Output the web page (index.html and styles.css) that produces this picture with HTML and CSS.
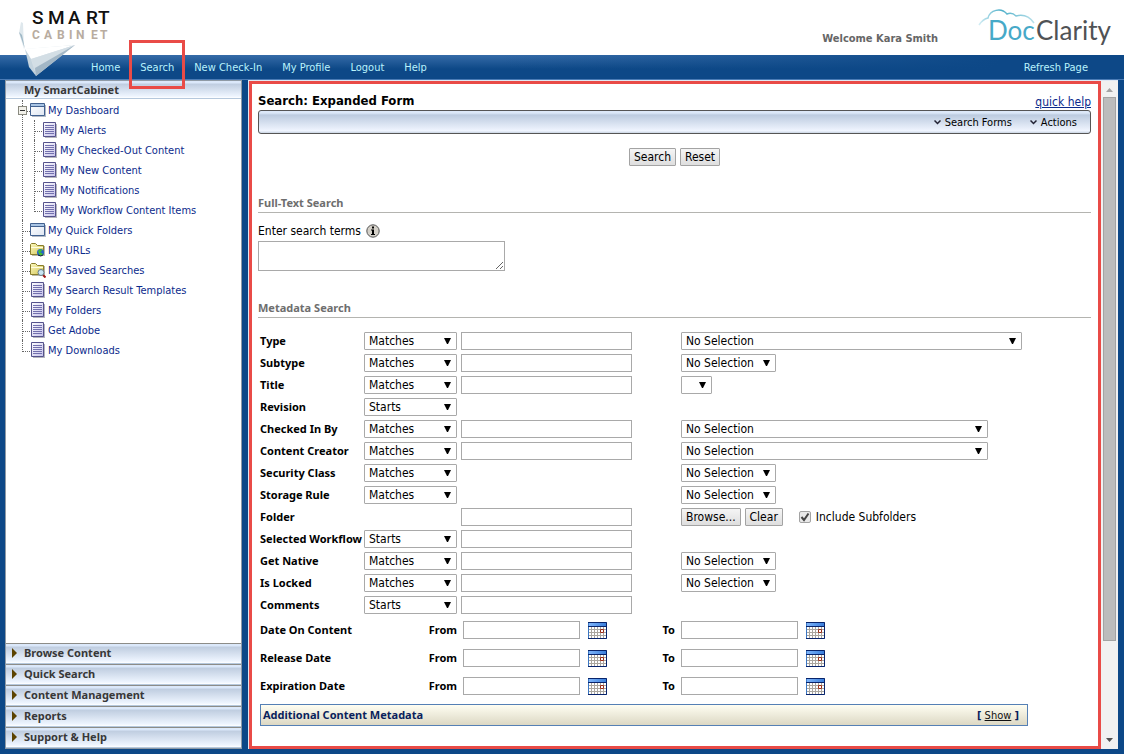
FILE: index.html
```html
<!DOCTYPE html>
<html lang="en">
<head>
<meta charset="UTF-8" />
<meta name="viewport" content="width=device-width, initial-scale=1" />
<title>SmartCabinet - Search</title>
<link rel="stylesheet" href="styles.css">
</head>
<body>

<!-- shared icons -->
<svg width="0" height="0" class="defs" aria-hidden="true">
  <defs>
    <linearGradient id="pageFill" x1="0" y1="0" x2="1" y2="1"><stop offset="0" stop-color="#fff"/><stop offset="1" stop-color="#c4c0ea"/></linearGradient>
    <linearGradient id="winFill" x1="0" y1="0" x2="1" y2="1"><stop offset="0" stop-color="#fff"/><stop offset="1" stop-color="#dfe6f2"/></linearGradient>
    <linearGradient id="folderFill" x1="0" y1="0" x2="1" y2="1"><stop offset="0" stop-color="#fbf7bb"/><stop offset="1" stop-color="#d3c75a"/></linearGradient>
    <linearGradient id="calFill" x1="0" y1="0" x2="1" y2="0"><stop offset="0" stop-color="#7db4fa"/><stop offset="1" stop-color="#3b7fdc"/></linearGradient>
    <linearGradient id="planeA" x1="0" y1="0" x2="1" y2="1"><stop offset="0" stop-color="#f4f8fa"/><stop offset="1" stop-color="#a9bccb"/></linearGradient>
    <linearGradient id="cloudLine" x1="0" y1="0" x2="1" y2="0"><stop offset="0" stop-color="#d3edf4"/><stop offset=".4" stop-color="#4fb0ca"/><stop offset="1" stop-color="#b9e0ea"/></linearGradient>
    <symbol id="page" viewBox="0 0 16 16">
      <path d="M3 2h12v14H3z" fill="#b5b5bd"/>
      <path d="M1.500.5h12v14h-12z" fill="url(#pageFill)" stroke="#55528c"/>
      <path d="M3 3.500h9M3 5.500h9M3 7.500h9M3 9.500h9M3 11.500h9" stroke="#7370ae"/>
    </symbol>
    <symbol id="window" viewBox="0 0 16 16">
      <path d="M2 3h14v12H2z" fill="#b3bac6"/>
      <path d="M.5 1.500h14v12H.5z" fill="url(#winFill)" stroke="#42618f"/>
      <path d="M1 2h13v2H1z" fill="#a8c4e4"/><path d="M0 4.500h15" stroke="#42618f"/>
    </symbol>
    <symbol id="folder" viewBox="0 0 16 16">
      <path d="M2 4h13v10H2z" fill="#b8b8a8"/>
      <path d="M.5 12.500v-10l1-1h4l2 2h6v9z" fill="url(#folderFill)" stroke="#8a7e2c"/>
      <path d="M1 5.500h12" stroke="#fffde0"/>
    </symbol>
    <symbol id="calendar" viewBox="0 0 19 17">
      <path d="M.5.5h18v16H.5z" fill="#fff" stroke="#3a76c4"/>
      <path d="M1 1h17v3H1z" fill="url(#calFill)"/>
      <path d="M3.500 5v11M6.500 5v11M9.500 5v11M12.500 5v11M15.500 5v11M1 7.500h17M1 10.500h17M1 13.500h17" stroke="#aaa69f"/>
      <path d="M0 .5h18.500v16H0M0 4.500h18" fill="none" stroke="#08246b"/>
      <path d="M12.500 7.500h3v3h-3z" fill="#fff" stroke="#9c2f18"/>
    </symbol>
  </defs>
</svg>

<header class="top">
  <svg class="smart-logo" width="112" height="78" viewBox="0 0 112 78" role="img" aria-label="Smart Cabinet">
    <path d="M21 22l2 1 1 26-5-16z" fill="#dfe8ed"/>
    <path d="M19 32l3 3 3 14z" fill="#9fb8c6"/>
    <path d="M25 49l50-4-39 31z" fill="url(#planeA)"/>
    <path d="M25 49l50-4-44 14z" fill="#fff"/>
    <path d="M31 59l44-14-40 23z" fill="#d3dee5"/>
    <path d="M35 68l40-23-39 31z" fill="#a3b7c6"/>
    <path d="M25 49l6 10 5 17-7-9z" fill="#c5d4de"/>
    <text class="smart-word" x="32 48 68 86 98" y="24">SMART</text>
    <text class="cabinet-word" x="32 44 57 69 76 91 100" y="39">CABINET</text>
  </svg>
  <span class="welcome">Welcome Kara Smith</span>
  <svg class="doc-logo" width="136" height="46" viewBox="0 0 136 46" role="img" aria-label="DocClarity">
    <path d="M3 25Q7 19 12 18C14 10 25 7 31 14Q36 12 40 16Q51 13 58 23" fill="none" stroke="url(#cloudLine)" stroke-width="1.500"/>
    <text class="doc-word" x="12" y="40">Doc<tspan class="clarity-word" x="60">Clarity</tspan></text>
  </svg>
</header>

<nav class="menu">
  <a href="#">Home</a>
  <a href="#" class="marked">Search</a>
  <a href="#">New Check-In</a>
  <a href="#">My Profile</a>
  <a href="#">Logout</a>
  <a href="#">Help</a>
  <a href="#" class="refresh">Refresh Page</a>
</nav>

<div class="workspace">
  <aside class="sidebar">
    <h2 class="side-title">My SmartCabinet</h2>
    <ul class="tree">
      <li>
        <a href="#"><svg class="icon"><use href="#window"/></svg>My Dashboard</a>
        <button class="toggle" aria-label="Collapse My Dashboard"></button>
        <ul class="subtree">
          <li><a href="#"><svg class="icon"><use href="#page"/></svg>My Alerts</a></li>
          <li><a href="#"><svg class="icon"><use href="#page"/></svg>My Checked-Out Content</a></li>
          <li><a href="#"><svg class="icon"><use href="#page"/></svg>My New Content</a></li>
          <li><a href="#"><svg class="icon"><use href="#page"/></svg>My Notifications</a></li>
          <li><a href="#"><svg class="icon"><use href="#page"/></svg>My Workflow Content Items</a></li>
        </ul>
      </li>
      <li><a href="#"><svg class="icon"><use href="#window"/></svg>My Quick Folders</a></li>
      <li><a href="#"><svg class="icon" viewBox="0 0 16 16"><use href="#folder"/><circle cx="10.500" cy="10.500" r="3.500" fill="#2464c8"/><path d="M8 9l3-2 1 2-2 1 3 2-2 2-2-2z" fill="#43bd32"/><path d="M8 13q3 2 5 0" stroke="#123" fill="none"/></svg>My URLs</a></li>
      <li><a href="#"><svg class="icon" viewBox="0 0 16 16"><use href="#folder"/><path d="M13 13l2.500 2.500" stroke="#a01818" stroke-width="2"/><circle cx="11" cy="10.500" r="3" fill="#c9e6f4" stroke="#66798a"/></svg>My Saved Searches</a></li>
      <li><a href="#"><svg class="icon"><use href="#page"/></svg>My Search Result Templates</a></li>
      <li><a href="#"><svg class="icon"><use href="#page"/></svg>My Folders</a></li>
      <li><a href="#"><svg class="icon"><use href="#page"/></svg>Get Adobe</a></li>
      <li><a href="#"><svg class="icon"><use href="#page"/></svg>My Downloads</a></li>
    </ul>
    <div class="accordion">
      <button>Browse Content</button>
      <button>Quick Search</button>
      <button>Content Management</button>
      <button>Reports</button>
      <button>Support &amp; Help</button>
    </div>
  </aside>

  <div class="content">
    <main class="page">
      <div class="page-head">
        <h1>Search: Expanded Form</h1>
        <a href="#">quick help</a>
      </div>
      <div class="toolbar">
        <button><svg width="7" height="5" viewBox="0 0 7 5"><path d="M.5.5l3 3 3-3" fill="none" stroke="#223" stroke-width="1.500"/></svg>Search Forms</button>
        <button><svg width="7" height="5" viewBox="0 0 7 5"><path d="M.5.5l3 3 3-3" fill="none" stroke="#223" stroke-width="1.500"/></svg>Actions</button>
      </div>

      <form>
        <div class="submit-row">
          <button type="button" class="btn">Search</button>
          <button type="button" class="btn">Reset</button>
        </div>

        <h3>Full-Text Search</h3>
        <div class="terms">
          <label for="terms">Enter search terms</label>
          <svg width="14" height="14" viewBox="0 0 14 14"><circle cx="7" cy="7" r="6.200" fill="#d4d0c8" stroke="#555"/><path d="M5 5.500h3V10h1v1H5v-1h1V6.500H5zM6 2.500h2v2H6z" fill="#000"/></svg>
        </div>
        <textarea id="terms"></textarea>

        <h3>Metadata Search</h3>
        <div class="fields">
          <div class="field">
            <label for="type">Type</label>
            <select class="op" aria-label="Type operator"><option>Matches</option></select>
            <input type="text" id="type">
            <div class="pick"><select class="widest" aria-label="Type value"><option>No Selection</option></select></div>
          </div>
          <div class="field">
            <label for="subtype">Subtype</label>
            <select class="op" aria-label="Subtype operator"><option>Matches</option></select>
            <input type="text" id="subtype">
            <div class="pick"><select class="short" aria-label="Subtype value"><option>No Selection</option></select></div>
          </div>
          <div class="field">
            <label for="title">Title</label>
            <select class="op" aria-label="Title operator"><option>Matches</option></select>
            <input type="text" id="title">
            <div class="pick"><select class="tiny" aria-label="Title value"><option></option></select></div>
          </div>
          <div class="field">
            <label for="revision">Revision</label>
            <select class="op" id="revision"><option>Starts</option></select>
          </div>
          <div class="field">
            <label for="checkedin">Checked In By</label>
            <select class="op" aria-label="Checked In By operator"><option>Matches</option></select>
            <input type="text" id="checkedin">
            <div class="pick"><select class="wide" aria-label="Checked In By value"><option>No Selection</option></select></div>
          </div>
          <div class="field">
            <label for="creator">Content Creator</label>
            <select class="op" aria-label="Content Creator operator"><option>Matches</option></select>
            <input type="text" id="creator">
            <div class="pick"><select class="wide" aria-label="Content Creator value"><option>No Selection</option></select></div>
          </div>
          <div class="field">
            <label for="security">Security Class</label>
            <select class="op" aria-label="Security Class operator"><option>Matches</option></select>
            <div class="pick"><select class="short" id="security"><option>No Selection</option></select></div>
          </div>
          <div class="field">
            <label for="storage">Storage Rule</label>
            <select class="op" aria-label="Storage Rule operator"><option>Matches</option></select>
            <div class="pick"><select class="short" id="storage"><option>No Selection</option></select></div>
          </div>
          <div class="field">
            <label for="folderPath">Folder</label>
            <input type="text" id="folderPath">
            <div class="pick">
              <button type="button" class="btn">Browse...</button>
              <button type="button" class="btn">Clear</button>
              <label class="check"><input type="checkbox" checked>Include Subfolders</label>
            </div>
          </div>
          <div class="field">
            <label for="workflow">Selected Workflow</label>
            <select class="op" aria-label="Selected Workflow operator"><option>Starts</option></select>
            <input type="text" id="workflow">
          </div>
          <div class="field">
            <label for="native">Get Native</label>
            <select class="op" aria-label="Get Native operator"><option>Matches</option></select>
            <input type="text" id="native">
            <div class="pick"><select class="short" aria-label="Get Native value"><option>No Selection</option></select></div>
          </div>
          <div class="field">
            <label for="locked">Is Locked</label>
            <select class="op" aria-label="Is Locked operator"><option>Matches</option></select>
            <input type="text" id="locked">
            <div class="pick"><select class="short" aria-label="Is Locked value"><option>No Selection</option></select></div>
          </div>
          <div class="field">
            <label for="comments">Comments</label>
            <select class="op" aria-label="Comments operator"><option>Starts</option></select>
            <input type="text" id="comments">
          </div>

          <div class="dates">
            <span>Date On Content</span>
            <label for="contentFrom">From</label>
            <div class="date"><input type="text" id="contentFrom"><button type="button" aria-label="Pick date"><svg><use href="#calendar"/></svg></button></div>
            <label for="contentTo">To</label>
            <div class="date"><input type="text" id="contentTo"><button type="button" aria-label="Pick date"><svg><use href="#calendar"/></svg></button></div>
          </div>
          <div class="dates">
            <span>Release Date</span>
            <label for="releaseFrom">From</label>
            <div class="date"><input type="text" id="releaseFrom"><button type="button" aria-label="Pick date"><svg><use href="#calendar"/></svg></button></div>
            <label for="releaseTo">To</label>
            <div class="date"><input type="text" id="releaseTo"><button type="button" aria-label="Pick date"><svg><use href="#calendar"/></svg></button></div>
          </div>
          <div class="dates">
            <span>Expiration Date</span>
            <label for="expireFrom">From</label>
            <div class="date"><input type="text" id="expireFrom"><button type="button" aria-label="Pick date"><svg><use href="#calendar"/></svg></button></div>
            <label for="expireTo">To</label>
            <div class="date"><input type="text" id="expireTo"><button type="button" aria-label="Pick date"><svg><use href="#calendar"/></svg></button></div>
          </div>

          <div class="extra">
            <strong>Additional Content Metadata</strong>
            <span><b>[</b> <a href="#">Show</a> <b>]</b></span>
          </div>
        </div>
      </form>
    </main>
    <div class="scroll" aria-hidden="true">
      <svg width="17" height="16" viewBox="0 0 17 16"><path d="M5 11h7L8.500 7z" fill="#a3a3a3"/></svg>
      <div class="thumb"></div>
      <div class="track"></div>
      <svg width="17" height="16" viewBox="0 0 17 16"><path d="M5 5h7l-3.500 4z" fill="#505050"/></svg>
    </div>
  </div>
</div>

</body>
</html>
```

FILE: styles.css
```css
* { box-sizing: border-box; }

body {
  margin: 0;
  min-height: 100vh;
  display: flex;
  flex-direction: column;
  background: #0d4887;
  font-family: "DejaVu Sans Condensed", "Noto Sans", sans-serif;
  font-size: 11px;
  color: #000;
}

button, input, select, textarea {
  font: inherit;
  color: inherit;
  margin: 0;
}
button { cursor: pointer; }
.defs { position: absolute; }

/* header */
.top {
  position: relative;
  z-index: 1;
  height: 55px;
  display: flex;
  justify-content: flex-end;
  align-items: flex-start;
  gap: 38px;
  padding-right: 12px;
  background: #fff;
}
.smart-logo {
  position: absolute;
  left: 0;
  top: 0;
}
.smart-word {
  font: 500 19px Roboto, sans-serif;
  fill: #111;
}
.cabinet-word {
  font: 700 12px Roboto, sans-serif;
  fill: #b8aca0;
}
.doc-word {
  font: 400 26px Lato, sans-serif;
  fill: #46a9c8;
}
.clarity-word { fill: #505255; }
.welcome {
  padding-top: 32px;
  font-weight: bold;
  line-height: 14px;
  color: #666;
}

/* menu */
.menu {
  height: 25px;
  display: flex;
  align-items: center;
  gap: 20px;
  padding: 0 36px 0 91px;
  border-bottom: 1px solid #4a7bb5;
  background: linear-gradient(to right, transparent 500px, #0d4887 1000px), linear-gradient(#366ba8, #0d4887 14px);
}
.menu a {
  position: relative;
  color: #b9f3fd;
  text-decoration: none;
}
.menu .refresh { margin-left: auto; }
.marked::after {
  content: "";
  position: absolute;
  z-index: 2;
  inset: -21px -11px -15px;
  border: 3px solid #e94b47;
}

.workspace {
  flex: 1;
  display: flex;
  gap: 6px;
  padding: 0 6px 5px 5px;
}

/* sidebar */
.sidebar {
  width: 237px;
  display: flex;
  flex-direction: column;
  background: #fff;
  border: 1px solid #8f9aa5;
}
.side-title, .accordion button {
  height: 18px;
  margin: 0;
  padding: 0 0 0 18px;
  font-family: "Noto Sans", sans-serif;
  font-size: 11px;
  font-weight: bold;
  line-height: 18px;
  text-align: left;
  color: #383838;
  background: linear-gradient(#dbe8fa 2px, #bfcde0 3px, #eef5ff 90%, #fff);
  border: 0;
  border-bottom: 1px solid #b5c8dd;
}
.tree, .subtree {
  list-style: none;
  margin: 0;
  padding: 0;
}
.tree {
  flex: 1;
  padding: 1px 0 0 16px;
}
.tree li {
  position: relative;
  border-left: 1px dotted #666;
}
.tree li:last-child { border-left-color: transparent; }
.tree li a {
  height: 20px;
  display: flex;
  align-items: center;
  color: #0b2a8c;
  text-decoration: none;
}
.tree li a::before {
  content: "";
  align-self: flex-start;
  width: 7px;
  height: 11px;
  margin-left: -1px;
  border-left: 1px dotted #666;
  border-bottom: 1px dotted #666;
}
.subtree { padding-left: 11px; }
.icon {
  width: 16px;
  height: 16px;
  margin-right: 2px;
}
.toggle {
  position: absolute;
  left: -5px;
  top: 6px;
  width: 9px;
  height: 9px;
  padding: 0;
  border: 1px solid #8a8a80;
  background: linear-gradient(#333, #333) center / 5px 1px no-repeat, #f2f1ea;
}

.accordion {
  display: flex;
  flex-direction: column;
}
.accordion button {
  display: flex;
  align-items: center;
  gap: 7px;
  height: 21px;
  padding: 0 0 1px 6px;
  border-top: 1px solid #8c8c88;
}
.accordion button::before {
  content: "";
  border: 5px solid transparent;
  border-left-color: #5c4300;
  border-right: 0;
}

/* content */
.content {
  flex: 1;
  display: flex;
  background: #fff;
  border: 1px solid #dfe8f4;
  border-width: 1px 0 0 1px;
}
.page {
  flex: 1;
  padding: 7px 7px 19px 6px;
  border: 3px solid #e94b47;
}
.page-head {
  display: flex;
  justify-content: space-between;
  height: 19px;
}
h1 {
  margin: 0;
  font-size: 13px;
  line-height: 19px;
}
.page-head a {
  padding-top: 2px;
  font-size: 12px;
  line-height: 18px;
  color: #0b2a8c;
}
.toolbar {
  height: 24px;
  display: flex;
  justify-content: flex-end;
  align-items: center;
  gap: 18px;
  padding-right: 13px;
  border: 1px solid #555;
  border-radius: 3px;
  background: linear-gradient(#dce8f8 2px, #bccbdf 4px, #f0f5ff 90%, #c9d4e2);
}
.toolbar button {
  display: flex;
  align-items: center;
  gap: 4px;
  padding: 0;
  border: 0;
  background: none;
}
.submit-row {
  display: flex;
  justify-content: center;
  gap: 4px;
  padding-top: 14px;
}
.btn {
  height: 18px;
  padding: 0 4px;
  font-size: 12px;
  line-height: 16px;
  border: 1px solid #a3a3a3;
  border-radius: 1px;
  background: linear-gradient(#f5f5f5, #dedede);
}
h3 {
  margin: 28px 0 0;
  padding-bottom: 1px;
  font-family: "Noto Sans", sans-serif;
  font-size: 11px;
  line-height: 17px;
  color: #6e6e6e;
  border-bottom: 1px solid #b4b4b0;
}
.terms {
  display: flex;
  align-items: center;
  gap: 5px;
  height: 20px;
  margin-top: 8px;
  font-size: 12px;
}
textarea {
  display: block;
  width: 247px;
  height: 30px;
  border: 1px solid #a9a9a9;
}

.fields { padding: 12px 0 0 2px; }
.field {
  display: grid;
  grid-template-columns: 104px 97px 220px 1fr;
  align-items: center;
  height: 22px;
}
.field > label, .dates > label, .dates > span, .extra strong {
  padding-bottom: 2px;
  font-family: "Noto Sans", sans-serif;
  font-weight: bold;
  white-space: nowrap;
}
.field > * { grid-row: 1; }
.op {
  grid-column: 2;
  width: 93px;
}
input[type="text"] {
  width: 171px;
  height: 18px;
  padding: 0 3px;
  border: 1px solid #a9a9a9;
}
.field input[type="text"] { grid-column: 3; }
.pick {
  grid-column: 4;
  display: flex;
  align-items: center;
  gap: 4px;
}
select {
  appearance: none;
  height: 18px;
  padding: 0 4px;
  font-size: 12px;
  line-height: 16px;
  border: 1px solid #a9a9a9;
  border-radius: 1px;
  background: #fff url("data:image/svg+xml,%3Csvg xmlns='http://www.w3.org/2000/svg' width='7' height='7'%3E%3Cpath d='M0 0h7L4 6H3z'/%3E%3C/svg%3E") no-repeat right 5px center;
}
.widest { width: 341px; }
.wide { width: 307px; }
.short { width: 95px; }
.tiny { width: 31px; }
.check {
  display: flex;
  align-items: center;
  gap: 5px;
  margin-left: 12px;
  font-size: 12px;
}
.check input {
  appearance: none;
  width: 12px;
  height: 12px;
  border: 1px solid #a3a3a3;
  border-radius: 2px;
  background: #e8e8e8 url("data:image/svg+xml,%3Csvg xmlns='http://www.w3.org/2000/svg' width='10' height='10'%3E%3Cpath d='M1.500 5l2.500 3L8.500 1.500' fill='none' stroke='%23444' stroke-width='2'/%3E%3C/svg%3E") center no-repeat;
}

.dates {
  display: grid;
  grid-template-columns: 104px 87px 144px 62px 144px;
  column-gap: 6px;
  align-items: center;
  height: 28px;
}
.dates label { text-align: right; }
.date {
  display: flex;
  align-items: center;
  gap: 8px;
}
.date input[type="text"] { width: 117px; }
.date button {
  padding: 0;
  border: 0;
  background: none;
}
.date svg {
  display: block;
  width: 19px;
  height: 17px;
}

.extra {
  display: flex;
  justify-content: space-between;
  align-items: center;
  max-width: 768px;
  height: 22px;
  margin-top: 4px;
  padding: 0 8px 0 2px;
  color: #0a1f5c;
  border: 1px solid #5580b5;
  background: linear-gradient(#fffef2, #dcd8c4);
}
.extra a { color: #111; }

/* scrollbar */
.scroll {
  width: 17px;
  display: flex;
  flex-direction: column;
  background: #f1f1f1;
}
.scroll svg { flex: none; }
.thumb {
  flex: 542;
  margin: 0 2px;
  background: #bcbcbc;
  border: 1px solid #a3a3a3;
}
.track { flex: 92; }
```
